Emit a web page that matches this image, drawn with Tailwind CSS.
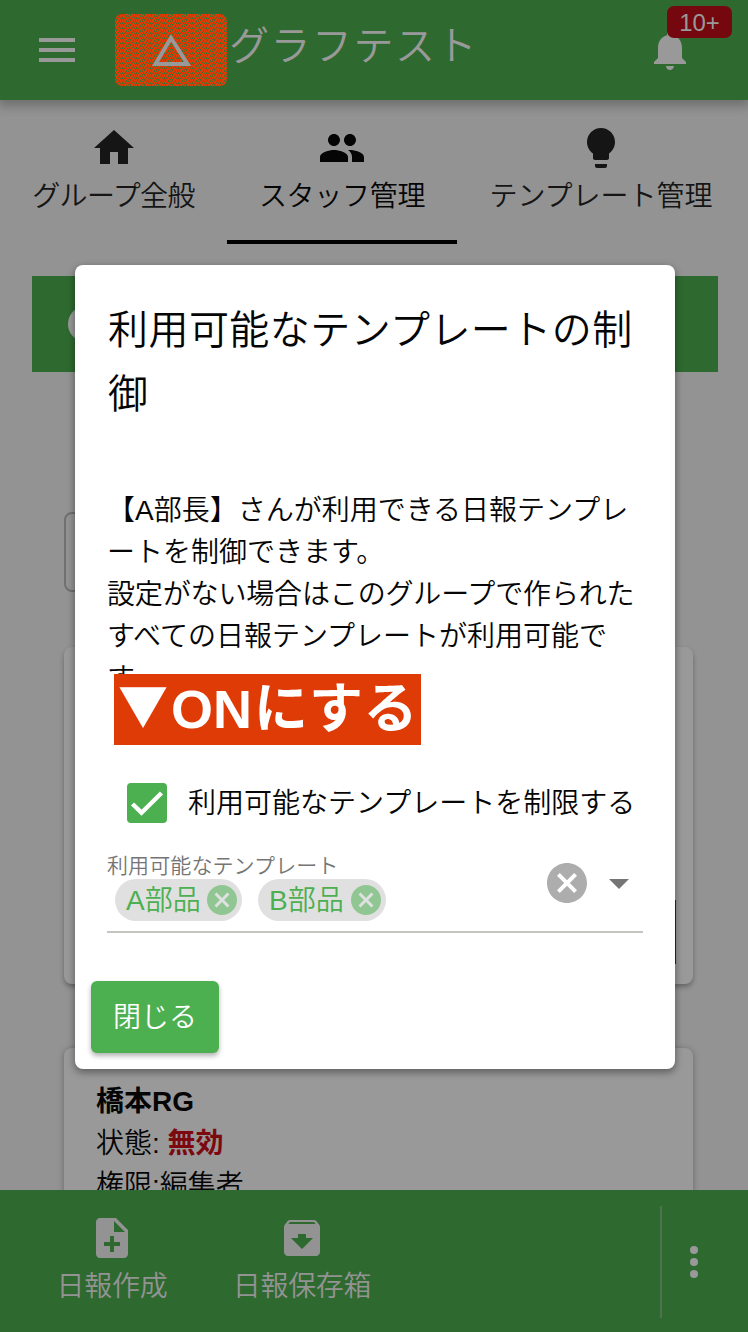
<!DOCTYPE html>
<html lang="ja">
<head>
<meta charset="utf-8">
<title>グラフテスト</title>
<script src="https://cdn.jsdelivr.net/npm/@tailwindcss/browser@4"></script>
</head>
<body class="bg-[#939393]">
<div class="relative w-[748px] h-[1332px] overflow-hidden flex flex-col bg-[#939393] text-[28px] leading-[42px] text-[#050505] whitespace-nowrap font-[350] font-['Liberation_Sans','Noto_Sans_CJK_JP',sans-serif]">

  <!-- App bar -->
  <header class="relative h-[100px] shrink-0 bg-[#2e692f] flex items-center pl-[33px] text-[#999999] shadow-[0_4px_10px_2px_rgba(0,0,0,0.25)]">
    <svg class="size-12" viewBox="0 0 24 24" fill="currentColor"><path d="M3 18h18v-2H3v2zm0-5h18v-2H3v2zm0-7v2h18V6H3z"/></svg>
    <svg class="ml-[34px] w-28 h-[72px]" viewBox="0 0 112 72">
      <defs><pattern id="grain" width="7" height="5" patternUnits="userSpaceOnUse"><rect width="7" height="5" fill="#e03c06"/><path d="M1 0h1v2h-1zM4 1h1v2h-1zM3 3h1v1h-1zM0 3h1v2h-1zM5 4h1v1h-1zM2 4h1v1h-1zM6 0h1v1h-1zM6 2h1v1h-1z" fill="#466a2c"/></pattern></defs>
      <rect width="112" height="72" rx="7" fill="url(#grain)"/>
      <path d="M56 24L40.500 50H72.500Z" fill="none" stroke="#999999" stroke-width="4"/>
    </svg>
    <h1 class="ml-[2px] -mt-[8px] text-[40px] leading-[60px] tracking-[1.5px]">グラフテスト</h1>
    <svg class="absolute left-[646px] top-[26px] size-12" viewBox="0 0 24 24" fill="currentColor"><path d="M12 22c1.100 0 2-.9 2-2h-4c0 1.100.89 2 2 2zm6-6v-5c0-3.070-1.640-5.640-4.500-6.320V4c0-.83-.67-1.500-1.500-1.500s-1.500.67-1.500 1.500v.68C7.630 5.360 6 7.920 6 11v5l-2 2v1h16v-1l-2-2z"/></svg>
    <span class="absolute left-[667px] top-[6px] w-[65px] h-8 rounded-[7px] bg-[#75080f] text-center text-2xl leading-[33px]">10+</span>
  </header>

  <!-- Tabs -->
  <nav class="h-[144px] shrink-0 flex">
    <div class="w-[227px] pt-6 flex flex-col items-center">
      <svg class="size-12" viewBox="0 0 24 24" fill="#151515"><path d="M10 20v-6h4v6h5v-8h3L12 3 2 12h3v8z"/></svg>
      <span class="mt-1 tracking-[-0.6px] text-[#151515]">グループ全般</span>
    </div>
    <div class="w-[230px] pt-6 flex flex-col items-center border-b-4 border-black">
      <svg class="size-12" viewBox="0 0 24 24" fill="#050505"><path d="M16 11c1.660 0 2.990-1.340 2.990-3S17.660 5 16 5c-1.660 0-3 1.340-3 3s1.340 3 3 3zm-8 0c1.660 0 2.990-1.340 2.990-3S9.660 5 8 5C6.340 5 5 6.340 5 8s1.340 3 3 3zm0 2c-2.330 0-7 1.170-7 3.500V19h14v-2.500c0-2.330-4.670-3.500-7-3.500zm8 0c-.29 0-.62.02-.97.05 1.160.84 1.970 1.970 1.970 3.450V19h6v-2.500c0-2.330-4.670-3.500-7-3.500z"/></svg>
      <span class="mt-1 tracking-[-0.3px]">スタッフ管理</span>
    </div>
    <div class="w-[288px] pt-6 flex flex-col items-center">
      <svg class="size-12" viewBox="0 0 24 24" fill="#151515"><path d="M9 21c0 .55.45 1 1 1h4c.55 0 1-.45 1-1v-1H9v1zm3-19C8.140 2 5 5.140 5 9c0 2.380 1.190 4.470 3 5.740V17c0 .55.45 1 1 1h6c.55 0 1-.45 1-1v-2.260c1.810-1.270 3-3.360 3-5.740 0-3.860-3.140-7-7-7z"/></svg>
      <span class="mt-1 text-[#151515]">テンプレート管理</span>
    </div>
  </nav>

  <!-- Staff page behind the dialog -->
  <main class="h-[946px] shrink-0 pt-8 overflow-hidden">
    <div class="ml-8 w-[686px] h-24 bg-[#2e692f] flex items-center pl-9"><span class="size-9 rounded-full bg-[#999999]"></span></div>
    <div class="mt-[140px] ml-16 w-[580px] h-20 rounded-lg border-2 border-[#707070]"></div>
    <section class="mt-[55px] ml-16 w-[629px] h-[337px] rounded-lg bg-[#999999] shadow-[0_3px_5px_rgba(0,0,0,0.3)] pt-[253px] pl-[611px]"><div class="w-px h-16 bg-[#6b0d12]"></div></section>
    <section class="mt-16 ml-16 w-[629px] h-[200px] rounded-lg bg-[#999999] shadow-[0_1px_6px_rgba(0,0,0,0.3)] pt-[33px] pl-8">
      <div class="font-bold">橋本RG</div>
      <div>状態: <b class="text-[#7c0910]">無効</b></div>
      <div>権限:編集者</div>
    </section>
  </main>

  <!-- Bottom bar -->
  <footer class="h-[142px] shrink-0 bg-[#2e692f] text-[#939393] flex pt-4">
    <div class="w-[224px] pt-2 flex flex-col items-center">
      <svg class="size-12" viewBox="0 0 24 24" fill="currentColor"><path d="M14 2H6c-1.100 0-1.990.9-1.990 2L4 20c0 1.100.89 2 1.990 2H18c1.100 0 2-.9 2-2V8l-6-6zm2 14h-3v3h-2v-3H8v-2h3v-3h2v3h3v2zm-3-7V3.500L18.500 9H13z"/></svg>
      <span class="mt-1 tracking-[-0.3px]">日報作成</span>
    </div>
    <div class="w-[156px] pt-2 flex flex-col items-center">
      <svg class="size-12" viewBox="0 0 24 24" fill="currentColor"><path d="M20.540 5.230l-1.390-1.680C18.880 3.210 18.470 3 18 3H6c-.47 0-.88.21-1.160.55L3.460 5.230C3.170 5.570 3 6.020 3 6.500V19c0 1.100.9 2 2 2h14c1.100 0 2-.9 2-2V6.500c0-.48-.17-.93-.46-1.270zM12 17.500L6.500 12H10v-2h4v2h3.500L12 17.500zM5.120 5l.81-1h12l.94 1H5.120z"/></svg>
      <span class="mt-1 tracking-[-0.3px]">日報保存箱</span>
    </div>
    <div class="ml-[280px] w-0.5 h-28 bg-[#4f724f]"></div>
    <svg class="ml-2 mt-8 size-12" viewBox="0 0 24 24" fill="#999999"><circle cx="12" cy="6" r="2"/><circle cx="12" cy="12" r="2"/><circle cx="12" cy="18" r="2"/></svg>
  </footer>

  <!-- Dialog -->
  <div class="absolute left-[75px] top-[265px] w-[600px] h-[804px] rounded-lg bg-white shadow-[0_3px_7px_1px_rgba(0,0,0,0.35)] pt-[33px]">
    <h2 class="pl-[33px] text-[40px] leading-[64px] tracking-[0.45px]">利用可能なテンプレートの制<br>御</h2>
    <div class="pl-8 mt-[64px] h-[210px]">
      <div>【A部長】さんが利用できる日報テンプレ</div>
      <div>ートを制御できます。</div>
      <div class="tracking-[-0.15px]">設定がない場合はこのグループで作られた</div>
      <div>すべての日報テンプレートが利用可能で</div>
      <div>す。</div>
    </div>
    <div class="absolute left-[39px] top-[409px] w-[307px] h-[71px] bg-[#df3b07] text-white font-bold text-[54px] flex items-center pl-[4px] pb-0.5"><span class="w-[53px] text-[50px] pb-3 font-['Noto_Sans_CJK_JP']">▼</span><span>ON</span><span class="ml-0.5 tracking-[0.5px]">にする</span></div>
    <div class="pl-[52px] mt-[83px] h-10 flex items-center">
      <svg class="size-10" viewBox="0 0 40 40"><rect width="40" height="40" rx="4" fill="#4caf50"/><path d="M5.500 21L14.500 29.700 34.500 10" fill="none" stroke="#fff" stroke-width="4.400"/></svg>
      <span class="ml-[21px] pt-0.5">利用可能なテンプレートを制限する</span>
    </div>
    <div class="relative ml-8 mt-[28px] w-[536px] h-[82px] border-b-2 border-[#c4c4c1]">
      <div class="text-[21px] leading-7 tracking-[0.1px] text-[#757575] pt-px -mb-px">利用可能なテンプレート</div>
      <div class="ml-2 flex gap-4 text-[#4caf50]">
        <span class="w-[127px] h-[42px] rounded-full bg-[#e0e0e0] flex items-center justify-between pl-[11px] pr-[2px]"><span class="pt-0.5">A部品</span><svg class="size-9" viewBox="0 0 24 24" fill="#8fc691"><path d="M12 2C6.470 2 2 6.470 2 12s4.470 10 10 10 10-4.470 10-10S17.530 2 12 2zm5 13.590L15.590 17 12 13.410 8.410 17 7 15.590 10.590 12 7 8.410 8.410 7 12 10.590 15.590 7 17 8.410 13.410 12 17 15.590z"/></svg></span>
        <span class="w-[128px] h-[42px] rounded-full bg-[#e0e0e0] flex items-center justify-between pl-[11px] pr-[2px]"><span class="pt-0.5">B部品</span><svg class="size-9" viewBox="0 0 24 24" fill="#8fc691"><path d="M12 2C6.470 2 2 6.470 2 12s4.470 10 10 10 10-4.470 10-10S17.530 2 12 2zm5 13.590L15.590 17 12 13.410 8.410 17 7 15.590 10.590 12 7 8.410 8.410 7 12 10.590 15.590 7 17 8.410 13.410 12 17 15.590z"/></svg></span>
      </div>
      <div class="absolute right-0 top-2 flex gap-1">
        <svg class="size-12" viewBox="0 0 24 24" fill="#adadad"><path d="M12 2C6.470 2 2 6.470 2 12s4.470 10 10 10 10-4.470 10-10S17.530 2 12 2zm5 13.590L15.590 17 12 13.410 8.410 17 7 15.590 10.590 12 7 8.410 8.410 7 12 10.590 15.590 7 17 8.410 13.410 12 17 15.590z"/></svg>
        <svg class="size-12" viewBox="0 0 24 24" fill="#757575"><path d="M7 10l5 5 5-5z"/></svg>
      </div>
    </div>
    <button class="ml-4 mt-[48px] w-32 h-[72px] rounded-md bg-[#4caf50] pt-0.5 text-white shadow-[0_3px_5px_rgba(0,0,0,0.3)]">閉じる</button>
  </div>
</div>
</body>
</html>
